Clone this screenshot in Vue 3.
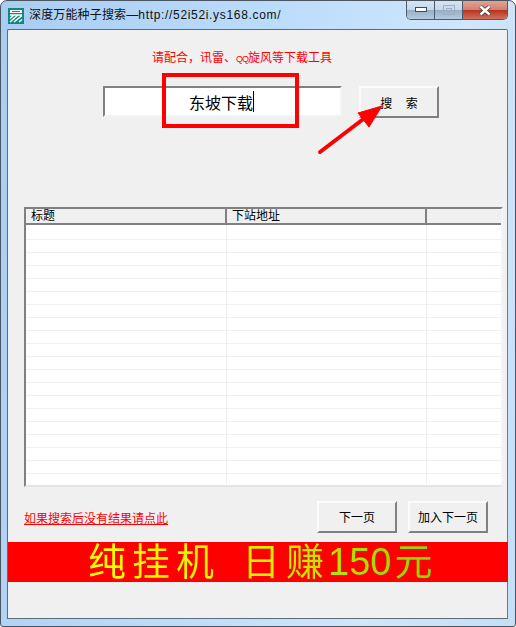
<script setup>
import { ref } from 'vue';

const keyword = ref('东坡下载');
const columns = ref(['标题', '下站地址', '']);
// 列表是空的，只画行线
const rows = ref(Array.from({ length: 20 }, (_, i) => i));
</script>

<template>
  <div class="window">
    <div class="titlebar">
      <svg class="app-icon" width="16" height="16" viewBox="0 0 16 16">
        <rect width="16" height="16" fill="#0d8a80" />
        <path d="M2 2h12v3H2z" fill="#fff" />
        <path d="M4 3.500h8" stroke="#0d8a80" stroke-width="1" />
        <path d="M2 7h12M2 10.500 6 7M2 14 10 7M6 14l8-6.500M11 14l3-2.500" stroke="#fff" stroke-width="1.600" fill="none" />
      </svg>
      <span class="title">深度万能种子搜索—<span class="url">http://52i52i.ys168.com/</span></span>
      <div class="controls">
        <div class="ctrl">
          <svg width="12" height="6" viewBox="0 0 12 6"><rect x="0.500" y="0.500" width="11" height="4" fill="#fff" stroke="#3c4a5a" /></svg>
        </div>
        <div class="ctrl">
          <svg width="12" height="10" viewBox="0 0 12 10"><rect x="0.500" y="0.500" width="11" height="9" fill="none" stroke="#9fb0c0" /><rect x="3.500" y="3.500" width="5" height="3" fill="none" stroke="#9fb0c0" /></svg>
        </div>
        <div class="ctrl close">
          <svg width="14" height="11" viewBox="0 0 14 11"><path d="M2.500 1.500 11.500 9.500M11.500 1.500 2.500 9.500" stroke="#3b3b3b" stroke-width="4" /><path d="M2.500 1.500 11.500 9.500M11.500 1.500 2.500 9.500" stroke="#fff" stroke-width="2.400" /></svg>
        </div>
      </div>
    </div>

    <div class="client">
      <p class="notice">请配合，讯雷、<span class="qq">QQ</span>旋风等下载工具</p>

      <div class="search-row">
        <div class="search-input"><span>{{ keyword }}</span><i class="caret"></i></div>
        <button class="btn search-btn">搜&nbsp;&nbsp;&nbsp;&nbsp;索</button>
      </div>

      <div class="list">
        <div class="list-head">
          <div v-for="col in columns" :key="col" class="head-cell">{{ col }}</div>
        </div>
        <div v-for="row in rows" :key="row" class="list-row">
          <div class="cell"></div>
          <div class="cell"></div>
          <div class="cell"></div>
        </div>
      </div>

      <div class="bottom-row">
        <a class="retry">如果搜索后没有结果请点此</a>
        <button class="btn next">下一页</button>
        <button class="btn add">加入下一页</button>
      </div>

      <div class="banner">
        <span class="banner-text">纯挂机<em class="gap"></em>日<span class="tight">赚</span><b>150</b>元</span>
      </div>
    </div>

    <!-- 截图上后加的红框和箭头 -->
    <div class="mark-box"></div>
    <svg class="mark-arrow" width="80" height="60" viewBox="0 0 80 60">
      <path d="M3 49 49 14" stroke="#ff0000" stroke-width="4" stroke-linecap="round" />
      <path d="M65 3 41 10 52 24Z" fill="#ff0000" stroke="#ff0000" />
    </svg>
  </div>
</template>

<style scoped>
.window {
  position: relative;
  width: 516px;
  height: 627px;
  box-sizing: border-box;
  padding: 0 7px 7px 6px;
  border: 1px solid #4a5560;
  border-radius: 7px 7px 3px 3px;
  background: linear-gradient(100deg, #a9cdf2 0%, #bcdcfb 45%, #cfe6fb 75%, #c4dff7 100%);
  font-family: "Liberation Sans", "Noto Sans CJK SC", sans-serif;
  display: flex;
  flex-direction: column;
  overflow: hidden;
}
.titlebar {
  height: 28px;
  display: flex;
  align-items: flex-start;
  flex: none;
}
.app-icon {
  margin-top: 7px;
  margin-left: 1px;
  flex: none;
}
.title {
  margin-left: 5px;
  margin-top: 6px;
  font-size: 12px;
  line-height: 17px;
  color: #111;
  white-space: nowrap;
  letter-spacing: 0.15px;
}
.url {
  letter-spacing: 0.67px;
}
.controls {
  margin-left: auto;
  width: 102px;
  height: 19px;
  display: flex;
  border: 1px solid #4e5a68;
  border-top: none;
  border-radius: 0 0 5px 5px;
  box-sizing: border-box;
  overflow: hidden;
  flex: none;
}
.ctrl {
  flex: 0 0 28px;
  display: flex;
  align-items: center;
  justify-content: center;
  border-right: 1px solid #4e5a68;
  box-sizing: border-box;
  background: linear-gradient(#d3e4f4 0%, #c6d9ec 48%, #97aec6 52%, #b6cbe0 100%);
}
.ctrl.close {
  flex: 1;
  border-right: none;
  background: linear-gradient(#e0a498 0%, #d27f70 48%, #b8351f 52%, #d0705c 100%);
}
.client {
  flex: 1;
  position: relative;
  background: #f0f0f0;
  border: 1px solid #5f6b75;
  border-right-color: #6a7a88;
  border-radius: 2px 2px 0 0;
  display: flex;
  flex-direction: column;
  min-height: 0;
}
.notice {
  margin: 20px 0 0 144px;
  font-size: 12px;
  line-height: 16px;
  color: #ff0000;
  height: 16px;
  white-space: nowrap;
}
.qq {
  font-size: 9px;
  letter-spacing: -1px;
}
.search-row {
  display: flex;
  margin: 20px 0 0 95px;
  height: 32px;
  align-items: flex-start;
}
.search-input {
  width: 239px;
  height: 31px;
  box-sizing: border-box;
  background: #fff;
  border: 2px solid;
  border-color: #808080 #f4f4f4 #f4f4f4 #808080;
  padding-left: 84px;
  display: flex;
  align-items: center;
  font-size: 16px;
  color: #000;
}
.caret {
  display: block;
  width: 1px;
  height: 21px;
  background: #000;
}
.btn {
  box-sizing: border-box;
  width: 80px;
  height: 32px;
  padding: 0;
  background: #f0f0f0;
  border: 2px solid;
  border-color: #fbfbfb #808080 #808080 #fbfbfb;
  font-family: "Liberation Sans", "Noto Sans CJK SC", sans-serif;
  font-size: 12px;
  color: #000;
}
.search-btn {
  margin-left: 17px;
}
.list {
  margin: 89px 0 0 16px;
  width: 479px;
  height: 280px;
  box-sizing: border-box;
  background: #fff;
  border: 2px solid;
  border-color: #808080 #f4f4f4 #e4e4e4 #808080;
  flex: none;
  overflow: hidden;
}
.list-head {
  display: grid;
  grid-template-columns: 201px 200px 1fr;
  height: 16px;
  box-sizing: border-box;
  background: #f0f0f0;
  border-bottom: 2px solid #808080;
}
.head-cell {
  font-size: 12px;
  line-height: 15px;
  color: #000;
  padding-left: 5px;
  box-sizing: border-box;
  border-right: 2px solid #808080;
}
.head-cell:last-child {
  border-right: none;
}
.list-row {
  display: grid;
  grid-template-columns: 201px 200px 1fr;
  height: 13px;
  box-sizing: border-box;
  border-bottom: 1px solid #f0f0f0;
}
.list-head + .list-row {
  height: 15px;
}
.cell {
  border-right: 1px solid #f0f0f0;
}
.cell:last-child {
  border-right: none;
}
.bottom-row {
  display: flex;
  align-items: center;
  margin: 13px 0 0 16px;
  height: 33px;
  width: 464px;
}
.retry {
  font-size: 12px;
  line-height: 14px;
  color: #ff0000;
  text-decoration: underline;
  margin-top: 4px;
  margin-right: auto;
}
.add {
  margin-left: 11px;
}
.banner {
  margin-top: 9px;
  height: 40px;
  background: #ff0000;
  display: flex;
  align-items: center;
  padding-left: 80px;
  width: 500px;
  box-sizing: border-box;
  flex: none;
}
.banner-text {
  font-size: 38px;
  line-height: 40px;
  letter-spacing: 6px;
  white-space: nowrap;
  color: transparent;
  background: linear-gradient(90deg, #ffff00 0%, #d8ee00 50%, #88d400 100%);
  -webkit-background-clip: text;
  background-clip: text;
}
.banner-text .tight {
  letter-spacing: 4px;
}
.banner-text b {
  font-weight: 400;
  letter-spacing: 0;
  margin-right: 3px;
}
.gap {
  display: inline-block;
  width: 22px;
}
.mark-box {
  position: absolute;
  left: 161px;
  top: 72px;
  width: 137px;
  height: 55px;
  box-sizing: border-box;
  border: 4px solid #ff0000;
}
.mark-arrow {
  position: absolute;
  left: 316px;
  top: 102px;
}
</style>

<style>
html, body { background: #fff; }
</style>
